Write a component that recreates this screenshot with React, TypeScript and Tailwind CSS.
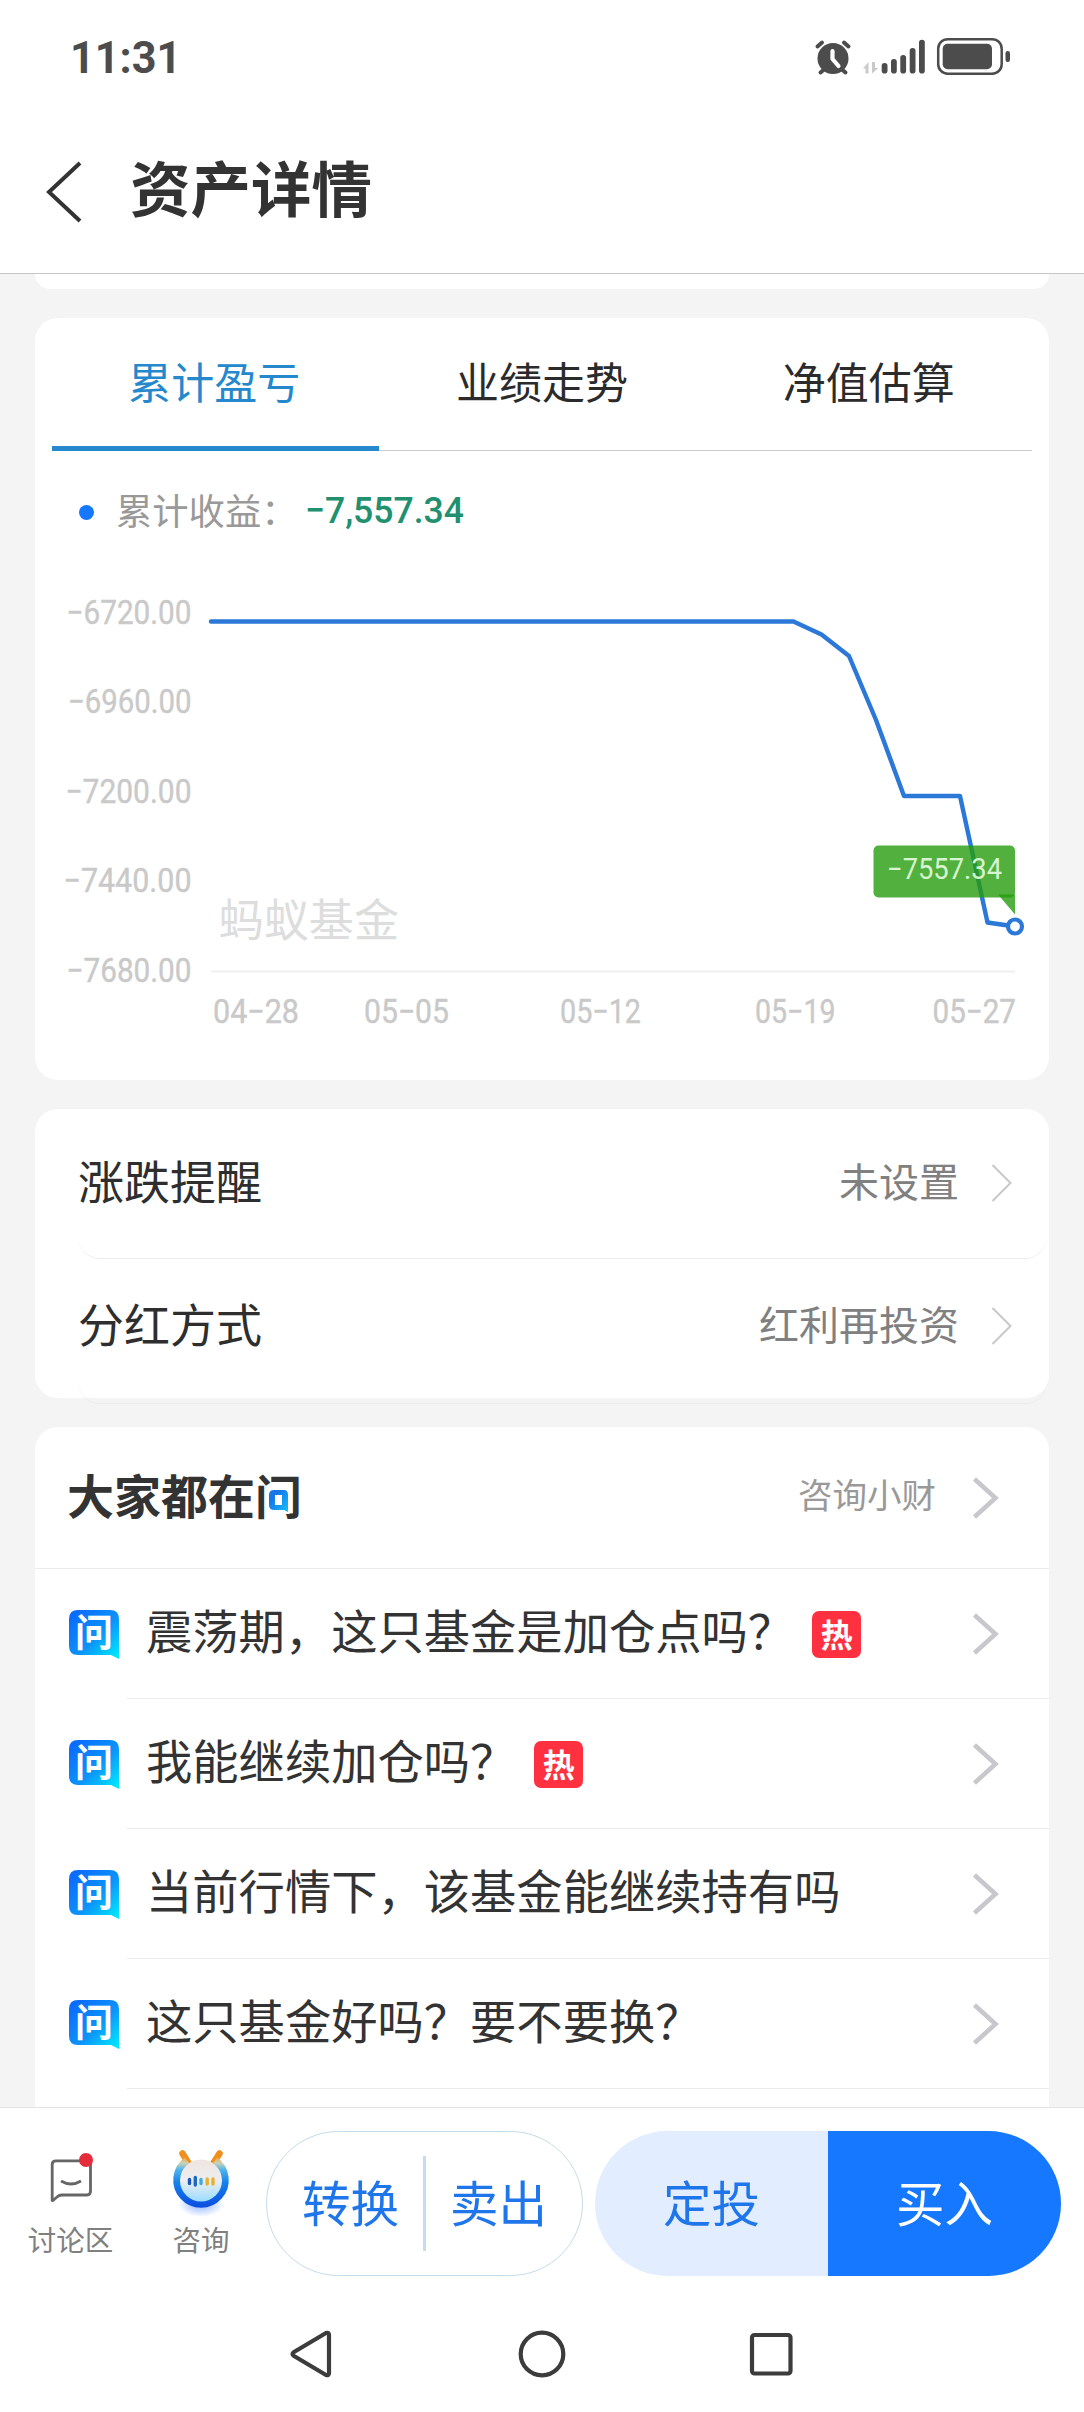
import { useId } from "react"

const tabs = ["累计盈亏", "业绩走势", "净值估算"]

const yLabels = [
    { text: "−6720.00", y: 624, x: 68 },
    { text: "−6960.00", y: 713, x: 69.5 },
    { text: "−7200.00", y: 803, x: 67 },
    { text: "−7440.00", y: 892, x: 65 },
    { text: "−7680.00", y: 982, x: 68 }
]

const xLabels = [
    { text: "04−28", x: 213, width: 86 },
    { text: "05−05", x: 364, width: 85 },
    { text: "05−12", x: 560, width: 81 },
    { text: "05−19", x: 755, width: 80.5 },
    { text: "05−27", x: 932.5, width: 83.5 }
]

const line = [
    [211, 621.5],
    [793.5, 621.5],
    [821.5, 634.5],
    [849, 656],
    [876, 720],
    [904, 796],
    [960, 796],
    [987.5, 922.5],
    [1015, 926.5]
]

const settings = [
    { label: "涨跌提醒", value: "未设置" },
    { label: "分红方式", value: "红利再投资" }
]

const questions = [
    { text: "震荡期，这只基金是加仓点吗？", hot: true },
    { text: "我能继续加仓吗？", hot: true },
    { text: "当前行情下，该基金能继续持有吗", hot: false },
    { text: "这只基金好吗？要不要换？", hot: false }
]

function StatusBar() {
    return (
        <div className="flex h-[110px] items-center justify-between pl-[70px] pr-[73px] pt-1">
            <span className="inline-block origin-left scale-x-[0.97] pt-[2px] font-['Roboto'] text-[44.5px] font-bold leading-none text-[#4c4c4c]">
                11:31
            </span>
            <svg className="h-[40px] w-[197px]" viewBox="814 36 197 40" fill="#4c4c4c">
                <circle cx="833" cy="57.5" r="15.5" />
                <g stroke="#4c4c4c" strokeWidth="4" strokeLinecap="round" fill="none">
                    <path d="M817.5 45.5 822 41.5M848.5 45.5 844 41.5M824 68.5 820.5 71.5M842 68.5 845.5 71.5" />
                    <path d="M832.5 50v8l6 7" stroke="#fff" strokeWidth="4.2" strokeLinejoin="round" />
                </g>
                <path d="M868.5 61v11.5h-3v-5h-2.5zM872 61h3v6h3.5L872 72.5z" fill="#c9c9c9" />
                <rect x="881.7" y="62" width="5.8" height="10.5" rx="2.8" />
                <rect x="891" y="58" width="5.8" height="14.5" rx="2.8" />
                <rect x="900.3" y="54" width="5.8" height="18.5" rx="2.8" />
                <rect x="909.7" y="47" width="5.8" height="25.5" rx="2.8" />
                <rect x="919" y="38.7" width="5.8" height="33.8" rx="2.8" />
                <rect x="938.2" y="38.2" width="63.5" height="34.5" rx="9.5" fill="none" stroke="#4c4c4c" strokeWidth="2.5" />
                <rect x="942.7" y="42.7" width="49.3" height="25.5" rx="5" />
                <rect x="1005.5" y="50" width="4.5" height="11" rx="2.2" />
            </svg>
        </div>
    )
}

function ThinChevron() {
    return (
        <svg className="-mt-[2px] h-[38px] w-[21px]" viewBox="0 0 21 38" fill="none" stroke="#c8c8c8" strokeWidth="2">
            <path d="M1.5 1 19.5 19 1.5 37" />
        </svg>
    )
}

function Chevron() {
    return (
        <svg className="h-[42px] w-[27px]" viewBox="0 0 27 42" fill="none" stroke="#c7c7cc" strokeWidth="4.5">
            <path d="M2.5 2 23.5 21 2.5 40" />
        </svg>
    )
}

function ProfitChart() {
    return (
        <svg className="block h-[520px] w-[1014px]" viewBox="35 560 1014 520">
            <g className="font-['Roboto']" fill="#c9c9c9" fontSize="32.5" stroke="#c9c9c9" strokeWidth="0.4">
                {yLabels.map((label) => (
                    <text key={label.text} x={label.x - 1.5} y={label.y} textLength={193 - label.x} lengthAdjust="spacingAndGlyphs">
                        {label.text}
                    </text>
                ))}
                {xLabels.map((label) => (
                    <text key={label.text} x={label.x} y="1023" textLength={label.width} lengthAdjust="spacingAndGlyphs">
                        {label.text}
                    </text>
                ))}
            </g>
            <text x="218.5" y="937" fontSize="45.2" fill="#dddddd">
                蚂蚁基金
            </text>
            <path d="M211 971.5H1015" stroke="#f0f0f0" strokeWidth="2" />
            <polyline
                points={line.map((p) => p.join(",")).join(" ")}
                fill="none"
                stroke="#2b78d8"
                strokeWidth="4.4"
                strokeLinecap="round"
                strokeLinejoin="round"
            />
            <circle cx="1015" cy="926.5" r="7" fill="#fff" stroke="#2b78d8" strokeWidth="4.2" />
            <g fill="#279c0e" fillOpacity="0.8">
                <rect x="873.5" y="845.5" width="141.5" height="52" rx="5" />
                <path d="M998 894.5h17v20z" />
            </g>
            <text
                className="font-['Roboto']"
                x="887"
                y="879"
                fontSize="29"
                fill="#d6f5d0"
                textLength="115"
                lengthAdjust="spacingAndGlyphs"
            >
                −7557.34
            </text>
        </svg>
    )
}

function AskIcon() {
    const id = useId()
    return (
        <div className="relative h-[49px] w-[50px]">
            <svg className="h-[49px] w-[50px]" viewBox="0 0 50 49">
                <defs>
                    <linearGradient id={id} x1="0.1" y1="0.1" x2="1" y2="1">
                        <stop offset="0" stopColor="#0a6cff" />
                        <stop offset="0.5" stopColor="#0c93f8" />
                        <stop offset="1" stopColor="#00f0ff" />
                    </linearGradient>
                </defs>
                <path d="M9 0H41Q50 0 50 9V49L42 45H9Q0 45 0 36V9Q0 0 9 0Z" fill={`url(#${id})`} />
            </svg>
            <span className="absolute left-[6px] top-[1px] text-[38px] font-bold leading-[38px] text-white">问</span>
        </div>
    )
}

function AskTitle() {
    return (
        <h2 className="relative -mt-[7px] text-[47px] font-bold leading-[60px] text-[#333333]">
            大家都在问
            <svg className="absolute left-[200px] top-[23px] h-[27px] w-[23px]" viewBox="-2 -3 23 27">
                <defs>
                    <linearGradient id="title-bubble" x1="0" y1="0" x2="1" y2="1">
                        <stop offset="0.3" stopColor="#1677e8" />
                        <stop offset="1" stopColor="#10c4ff" />
                    </linearGradient>
                </defs>
                <path d="M-1.5 -1H20.5V24H-1.5Z" fill="#fff" />
                <path
                    fillRule="evenodd"
                    fill="url(#title-bubble)"
                    d="M5 0H15Q19 0 19 5V22L15 20H5Q0 20 0 15V5Q0 0 5 0ZM6 5V15H13V5Z"
                />
            </svg>
        </h2>
    )
}

function Mascot() {
    return (
        <svg className="h-[70px] w-[60px]" viewBox="171 2147 60 70">
            <defs>
                <linearGradient id="ring" gradientUnits="userSpaceOnUse" x1="0" y1="2156" x2="0" y2="2207">
                    <stop offset="0" stopColor="#f6a63c" />
                    <stop offset="0.12" stopColor="#c9d2b8" />
                    <stop offset="0.25" stopColor="#4fb4ec" />
                    <stop offset="0.5" stopColor="#1681ea" />
                    <stop offset="1" stopColor="#0b4be0" />
                </linearGradient>
                <linearGradient id="face" x1="0" y1="0" x2="0" y2="1">
                    <stop offset="0" stopColor="#f0e4de" />
                    <stop offset="0.5" stopColor="#eceef2" />
                    <stop offset="1" stopColor="#9bdcff" />
                </linearGradient>
                <radialGradient id="glow">
                    <stop offset="0.4" stopColor="#9bbcff" stopOpacity="0.7" />
                    <stop offset="1" stopColor="#9bbcff" stopOpacity="0" />
                </radialGradient>
            </defs>
            <ellipse cx="201" cy="2203" rx="23" ry="13" fill="url(#glow)" />
            <path d="M182.5 2152.5 188.5 2162M219.5 2152.5 213.5 2162" stroke="#ef8f1c" strokeWidth="6.5" strokeLinecap="round" />
            <path d="M187 2159.5A24 24 0 1 0 215 2159.5" fill="none" stroke="url(#ring)" strokeWidth="7.5" />
            <circle cx="201" cy="2179.5" r="21" fill="url(#face)" />
            <g strokeWidth="3.4" strokeLinecap="round">
                <path d="M189.5 2178.5v4" stroke="#1c55b8" />
                <path d="M195.3 2176.5v7.5" stroke="#1c68c8" />
                <path d="M201 2178.5v4" stroke="#43a8d8" />
                <path d="M207.2 2178v5M213 2178v5" stroke="#e8b030" />
            </g>
        </svg>
    )
}

function ActionBar() {
    return (
        <div className="flex h-[181px] items-start border-t border-[#e2e2e2] bg-white pl-[25px] pr-[23px] pt-[23px] text-[48.5px] text-[#1f76ea]">
            <div className="flex w-[91px] flex-col items-center pt-[17px]">
                <svg className="h-[70px] w-[60px]" viewBox="41 2147 60 70" fill="none" stroke="#666666" strokeWidth="2.8">
                    <path d="M52.2 2199.5V2163.5Q52.2 2159.8 56 2159.8H87Q90.5 2159.8 90.5 2163.5V2190Q90.5 2194 87 2194H62Q59 2194 57 2196L53 2199.5Z" strokeLinejoin="round" />
                    <path d="M61 2180Q71 2186 81 2180" />
                    <circle cx="86" cy="2159" r="7" fill="#e62b3a" stroke="none" />
                </svg>
                <span className="mt-px text-[28.5px] leading-[40px] text-[#808080]">讨论区</span>
            </div>
            <div className="ml-[40px] flex w-[90px] flex-col items-center pt-[17px]">
                <Mascot />
                <span className="mt-px text-[28.5px] leading-[40px] text-[#808080]">咨询</span>
            </div>
            <div className="ml-[20px] flex h-[145px] w-[317px] items-center rounded-full border border-[#c5dbea]">
                <button className="flex-1 pb-[5px] pl-[11px]">转换</button>
                <span className="h-[95px] w-[3px] bg-[#c6dbef]" />
                <button className="flex-1 pb-[5px] pr-[11px]">卖出</button>
            </div>
            <div className="ml-[12px] flex h-[145px] flex-1 overflow-hidden rounded-full">
                <button className="flex-1 bg-[#e2eeff] pb-[5px]">定投</button>
                <button className="flex-1 bg-[#1677ff] pb-[5px] text-white">买入</button>
            </div>
        </div>
    )
}

function NavBar() {
    return (
        <div className="flex h-[124px] justify-center bg-white pt-[39px]">
            <svg className="h-[54px] w-[510px]" viewBox="287 2327 510 54" fill="none" stroke="#3c3c3c" strokeWidth="4.2" strokeLinejoin="round">
                <path d="M292.5 2354Q292.5 2353 294 2352L326 2333Q329 2332 329 2335V2373Q329 2376 326 2375L294 2356Q292.5 2355 292.5 2354Z" />
                <circle cx="542" cy="2354" r="21.3" />
                <rect x="752" y="2335" width="38.5" height="38.5" rx="2.5" />
            </svg>
        </div>
    )
}

export default function App() {
    return (
        <div className="flex h-[2412px] w-[1084px] flex-col overflow-hidden bg-[#f4f4f4] font-['Noto_Sans_CJK_SC',sans-serif] text-[#333333]">
            <header className="h-[274px] shrink-0 border-b border-[#c6c6c6] bg-white">
                <StatusBar />
                <div className="flex h-[160px] items-center pl-[45px] pt-[3px]">
                    <svg className="h-[62px] w-[38px]" viewBox="0 0 38 62" fill="none" stroke="#333333" strokeWidth="4">
                        <path d="M35 2 4 31 35 60" />
                    </svg>
                    <h1 className="-mt-[12px] ml-[47px] text-[60.5px] font-bold leading-[80px]">资产详情</h1>
                </div>
            </header>

            <main className="flex min-h-0 flex-1 flex-col overflow-hidden px-[35px]">
                <div className="h-[15px] shrink-0 rounded-b-[22px] bg-white" />

                <section className="mt-[29px] h-[762px] shrink-0 rounded-[23px] bg-white">
                    <div className="mx-[17px] grid h-[133px] grid-cols-3 border-b border-[#cccccc]">
                        {tabs.map((tab, i) => (
                            <div
                                key={tab}
                                className={
                                    i === 0
                                        ? "-mb-px flex justify-center border-b-[5px] border-[#2588cc] pr-[2px] pt-[30px] text-[43px] leading-[64px] text-[#2588cc]"
                                        : "flex justify-center pt-[30px] text-[43px] leading-[64px] text-[#2b2b2b]"
                                }
                            >
                                {tab}
                            </div>
                        ))}
                    </div>
                    <div className="flex h-[109px] items-center pb-[1px] pl-[44px]">
                        <span className="mt-[14px] h-[15px] w-[15px] rounded-full bg-[#1677ff]" />
                        <span className="ml-[22px] mt-[7px] w-[189px] text-[36.3px] leading-[50px] text-[#999999]">累计收益：</span>
                        <span className="mt-[12px] inline-block origin-left scale-x-[0.96] whitespace-nowrap font-['Roboto'] text-[37px] font-medium leading-[50px] text-[#20906f]">
                            −7,557.34
                        </span>
                    </div>
                    <ProfitChart />
                </section>

                <section className="mt-[29px] h-[289px] shrink-0 rounded-[23px] bg-white pl-[43px] pr-[2px]">
                    {settings.map((item, i) => (
                        <div
                            key={item.label}
                            className={
                                i === 0
                                    ? "flex h-[150px] items-center rounded-b-[22px] border-b border-[#ebebeb] pr-[35px]"
                                    : "flex h-[145px] items-center rounded-b-[22px] border-b border-[#ebebeb] pb-[8px] pr-[35px]"
                            }
                        >
                            <span className="-mt-[10px] flex-1 text-[46px] leading-[60px] text-[#2e2e2e]">{item.label}</span>
                            <span className="-mt-[8px] mr-[32px] text-[40px] leading-[60px] text-[#808080]">{item.value}</span>
                            <ThinChevron />
                        </div>
                    ))}
                </section>

                <section className="mt-[29px] shrink-0 rounded-t-[23px] bg-white">
                    <div className="flex h-[142px] items-center border-b border-[#ebebeb] pl-[32px] pr-[50px]">
                        <div className="flex-1">
                            <AskTitle />
                        </div>
                        <span className="-mt-[10px] mr-[36px] text-[34.5px] leading-[50px] text-[#999999]">咨询小财</span>
                        <Chevron />
                    </div>
                    {questions.map((question) => (
                        <div key={question.text} className="flex h-[130px] items-center pl-[34px]">
                            <AskIcon />
                            <div className="ml-[8px] flex h-full flex-1 items-center border-b border-[#ebebeb] pl-[19px] pr-[50px]">
                                <span className="-mt-[9px] whitespace-nowrap text-[46.3px] leading-[60px]">{question.text}</span>
                                {question.hot && (
                                    <span className="ml-[18px] mt-px flex h-[47px] w-[49px] items-center justify-center rounded-[7px] bg-[#ff3141] pb-[3px] text-[32px] font-bold leading-none text-white">
                                        热
                                    </span>
                                )}
                                <span className="ml-auto mt-px">
                                    <Chevron />
                                </span>
                            </div>
                        </div>
                    ))}
                    <div className="h-[60px]" />
                </section>
            </main>

            <footer className="shrink-0">
                <ActionBar />
                <NavBar />
            </footer>
        </div>
    )
}
